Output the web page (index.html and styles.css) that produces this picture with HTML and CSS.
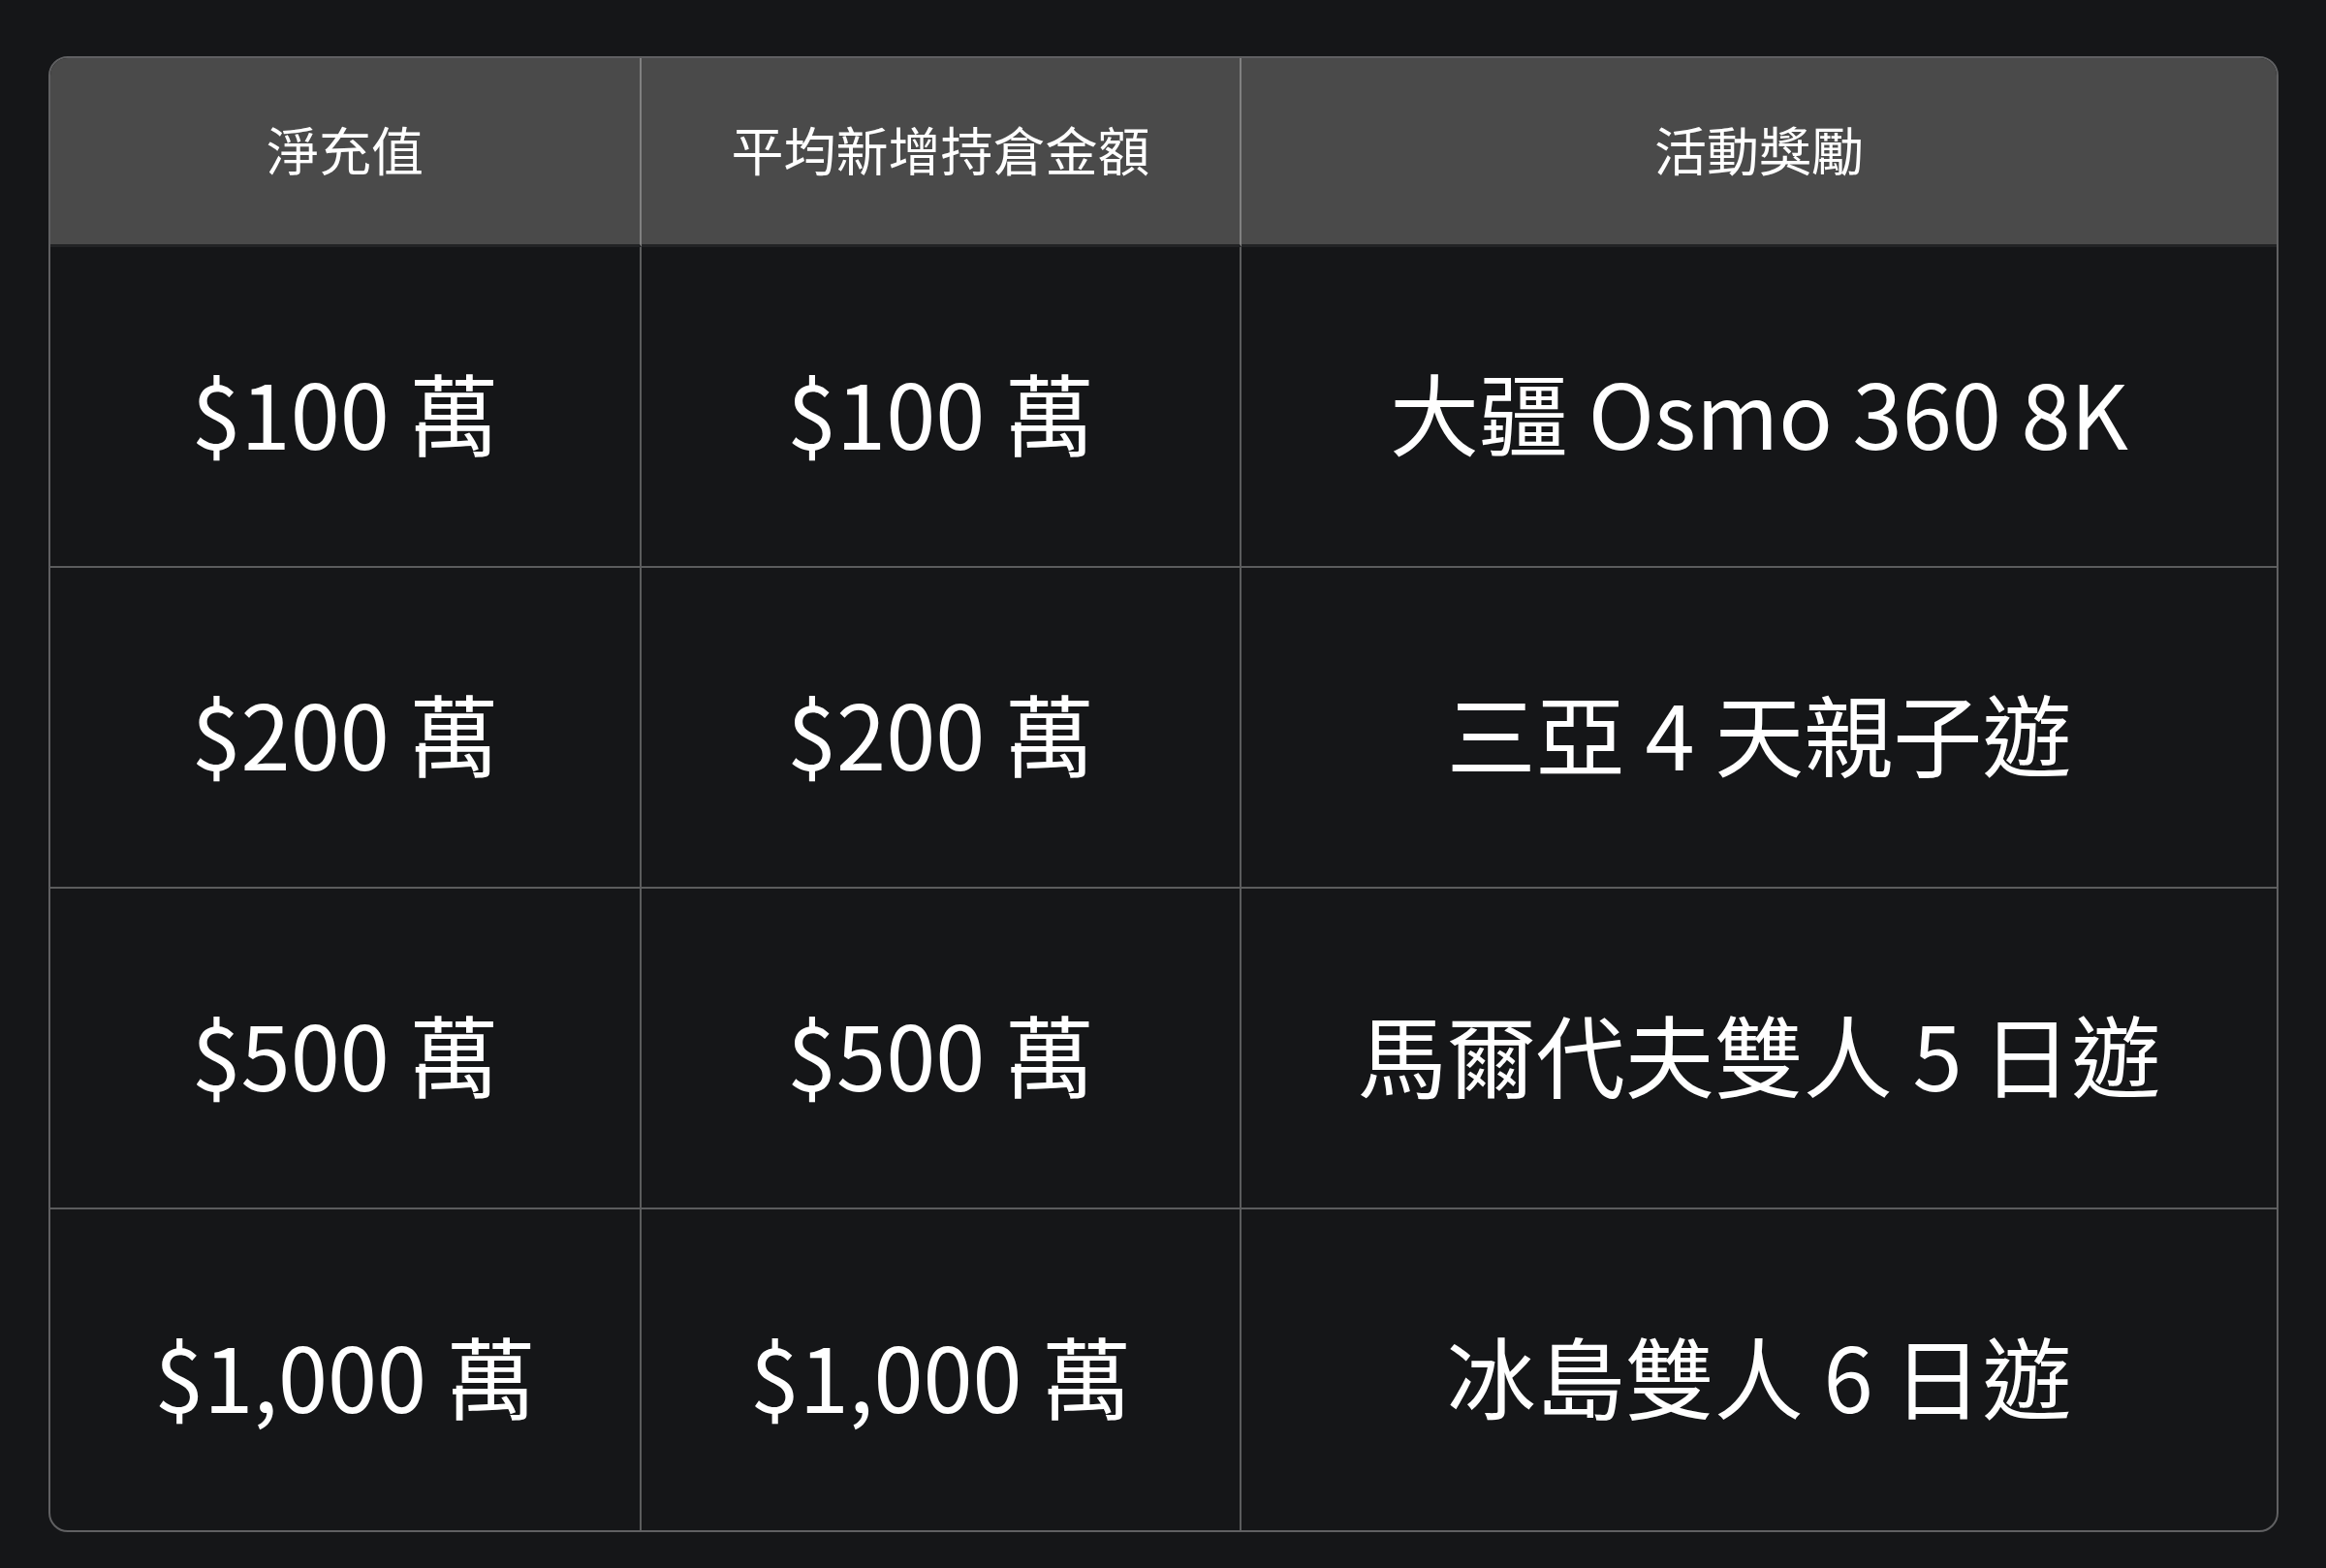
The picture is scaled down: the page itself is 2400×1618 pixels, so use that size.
FILE: index.html
```html
<!DOCTYPE html>
<html lang="zh-Hant">
<head>
<meta charset="utf-8">
<title>活動獎勵</title>
<link rel="stylesheet" href="styles.css">
</head>
<body>
<div class="page">
  <div class="table">
    <div class="cell head">淨充值</div>
    <div class="cell head">平均新增持倉金額</div>
    <div class="cell head last">活動獎勵</div>

    <div class="cell">$100 萬</div>
    <div class="cell">$100 萬</div>
    <div class="cell last">大疆 Osmo 360 8K</div>

    <div class="cell">$200 萬</div>
    <div class="cell">$200 萬</div>
    <div class="cell last">三亞 4 天親子遊</div>

    <div class="cell">$500 萬</div>
    <div class="cell">$500 萬</div>
    <div class="cell last">馬爾代夫雙人 5 日遊</div>

    <div class="cell bottom">$1,000 萬</div>
    <div class="cell bottom">$1,000 萬</div>
    <div class="cell bottom last">冰島雙人 6 日遊</div>
  </div>
</div>
</body>
</html>
```

FILE: styles.css
```css
html, body {
  margin: 0;
  padding: 0;
  background: #151618;
}

.page {
  padding: 58px 49px 0 50px;
  box-sizing: border-box;
  width: 2400px;
  height: 1618px;
}

.table {
  display: grid;
  grid-template-columns: 610px 619px 1fr;
  grid-template-rows: 195px repeat(4, 331px);
  border: 2px solid rgba(255, 255, 255, 0.32);
  border-radius: 20px;
  overflow: hidden;
  color: #ffffff;
  font-family: "Noto Sans CJK TC", "Noto Sans", sans-serif;
}

.cell {
  display: flex;
  align-items: center;
  justify-content: center;
  border-right: 2px solid rgba(255, 255, 255, 0.3);
  border-bottom: 2px solid rgba(255, 255, 255, 0.3);
  font-size: 92px;
  line-height: 1;
  padding-top: 8px;
  box-sizing: border-box;
  white-space: nowrap;
}

.cell.head {
  background: #4a4a4a;
  font-size: 54px;
  padding-top: 0;
  padding-bottom: 4px;
  border-bottom: 3px solid #222325;
}

.cell.last {
  border-right: none;
}

.cell.bottom {
  border-bottom: none;
}
```
